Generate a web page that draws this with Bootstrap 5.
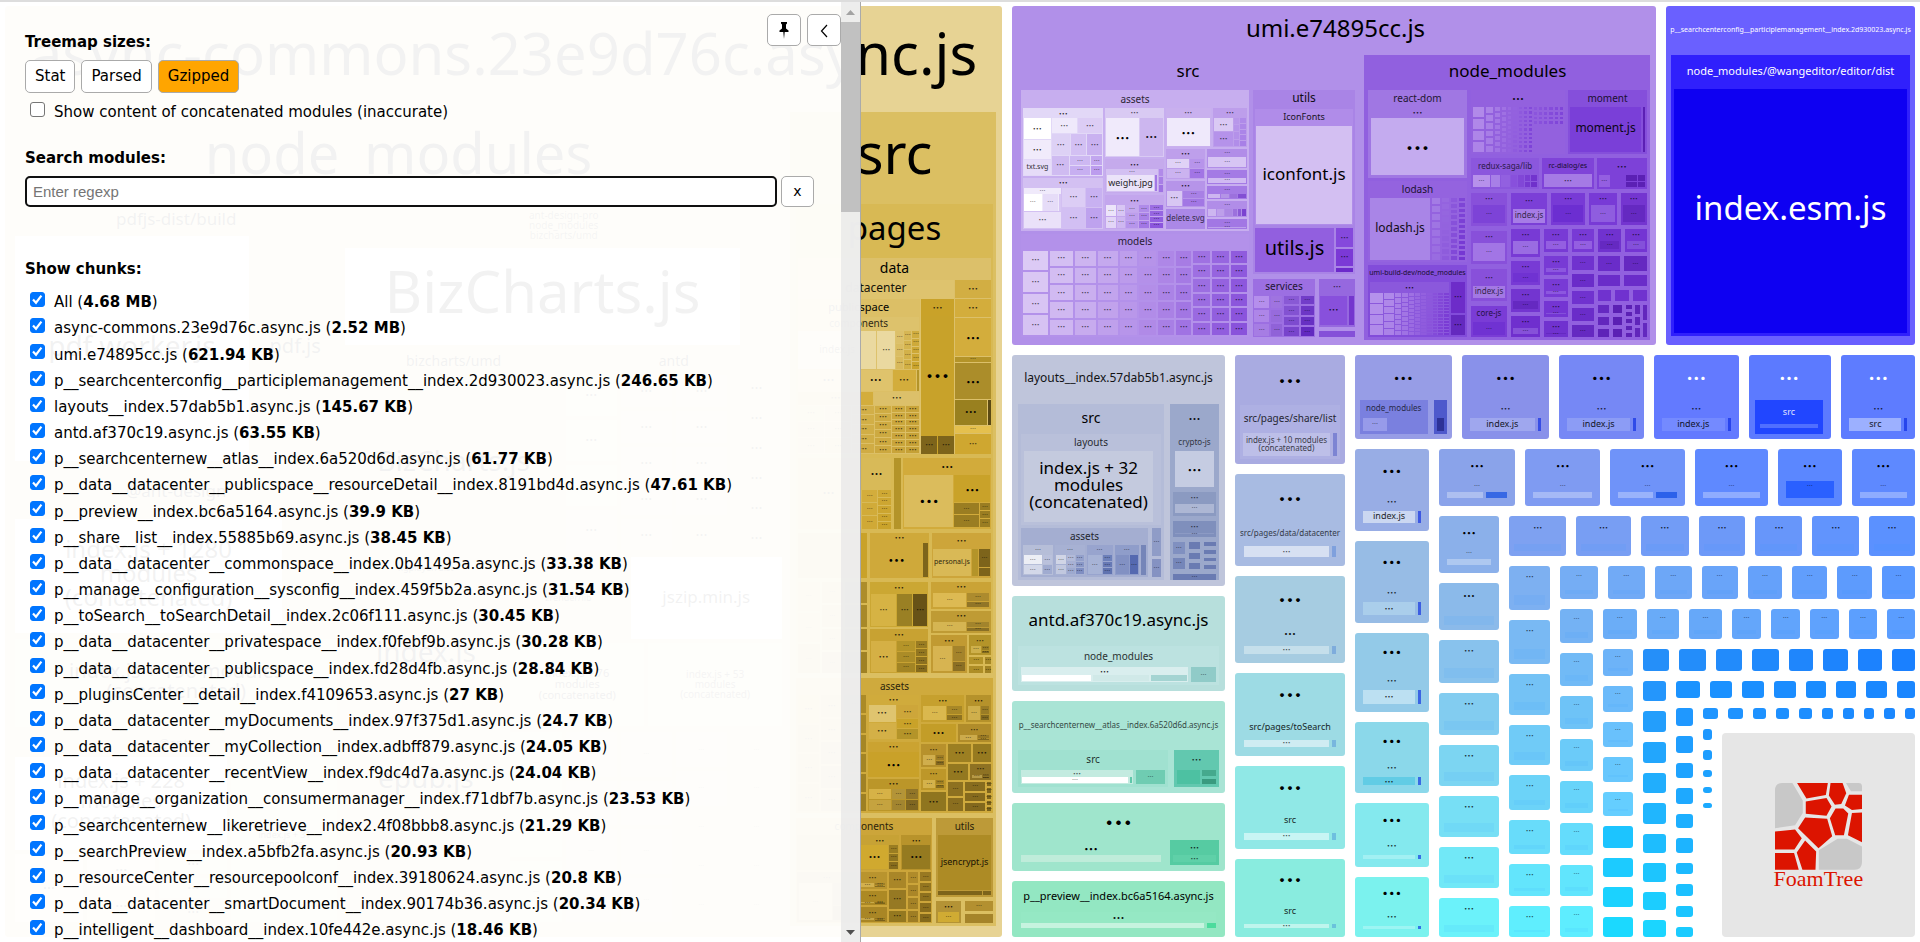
<!DOCTYPE html>
<html lang="en">
<head>
<meta charset="utf-8">
<meta name="viewport" content="width=device-width, initial-scale=1">
<title>Webpack Bundle Analyzer</title>
<link href="https://cdn.jsdelivr.net/npm/bootstrap@5.3.0/dist/css/bootstrap.min.css" rel="stylesheet">
<style>
  body { font-family: "DejaVu Sans", Verdana, sans-serif; font-size: 15px; color: #000; background: #fff; }
  .stage { border-top: 2px solid #ddd; padding: 4px 5px 5px; }

  /* treemap */
  .treemap { font-family: "Noto Sans", "Noto Sans CJK SC", sans-serif; line-height: 1; color: #000; }
  .tiles { display: grid; grid-template-rows: minmax(0, 1fr); grid-template-columns: minmax(0, 1fr); flex: 1 1 0; min-height: 0; min-width: 0; }
  .tile { min-width: 0; min-height: 0; display: flex; flex-direction: column; }
  .tile.soft { border-radius: 3px; }
  .cap { display: flex; align-items: center; justify-content: center; text-align: center; white-space: pre; min-height: 0; min-width: 0; padding-bottom: .2em; }
  .tile > .cap:only-child { flex: 1 1 0; }
  .dots { font-family: "Noto Sans CJK SC", sans-serif; font-weight: 700; padding: 0; }
  .pale { color: #fff; }
  .t6 { font-size: 6px; opacity: .5; } .t7 { font-size: 7px; opacity: .8; } .t8 { font-size: 8px; opacity: .7; } .t9 { font-size: 9px; opacity: .85; }
  .t10 { font-size: 10px; opacity: .8; } .t11 { font-size: 11px; } .t12 { font-size: 12px; opacity: .9; } .t14 { font-size: 14px; }
  .t17 { font-size: 17px; } .t20 { font-size: 20px; } .t24 { font-size: 24px; } .t28 { font-size: 28px; } .t33 { font-size: 33px; } .t56 { font-size: 56px; } .t58 { font-size: 58px; }
  .t7.pale { opacity: 1; }
  .foamtree { background: #e6e6e6; border-radius: 4px; color: #dc1400; font: 22px/18px "Liberation Serif", serif; }
  .foamtree svg { width: 45%; }

  /* sidebar */
  .side { width: 861px; background: rgba(255, 255, 255, .95); border-right: 1px solid #aaa; }
  .pane { padding: 26px 27px 0 25px; }
  .head { font-weight: 700; line-height: 28px; }
  .tool { font-size: 15px; line-height: 31px; padding: 0 9px; color: #000; background: #fff; border: 1px solid #aaa; border-radius: 5px; height: 33px; }
  .tool.on { background: #ffa500; }
  .tool.slim { height: 31px; line-height: 27px; width: 33px; padding: 0; font-size: 14px; }
  .corner { top: 12px; right: 19px; gap: 6px; }
  .corner .tool { width: 34px; padding: 0; height: 32px; }
  .regexp { font: 15px/20px "Liberation Sans", sans-serif; border: 2px solid #101010; border-radius: 5px; padding: 3px 6px; height: 31px; background: #fff; min-width: 0; }
  .regexp::placeholder { color: #757575; }
  .check { appearance: none; width: 15px; height: 15px; margin: 0 9px 0 5px; border: 1px solid #767676; border-radius: 3px; background: #fff; flex: none; }
  .check:checked { border-color: #0075ff; background: #0075ff url("data:image/svg+xml,%3Csvg xmlns='http://www.w3.org/2000/svg' viewBox='0 0 15 15'%3E%3Cpath d='M3 7.5l3 3.2 5.4-7' fill='none' stroke='white' stroke-width='2.2'/%3E%3C/svg%3E") center/15px; }
  .chunks { display: grid; grid-auto-rows: 1fr; height: 654px; margin-top: 7px; }
  .line { display: flex; align-items: center; white-space: nowrap; }
  .line .check { margin-bottom: 6px; }
  .track { width: 19px; background: rgba(233, 233, 233, .8); }
  .thumb { height: 190px; background: #c1c1c1; }
  .arrow { height: 20px; }
</style>
</head>
<body class="vh-100 overflow-hidden">
<main class="stage h-100 position-relative">
  <div class="treemap h-100 d-flex" id="treemap" aria-label="Bundle treemap"></div>

  <aside class="side position-absolute top-0 start-0 h-100 d-flex overflow-hidden">
    <div class="pane flex-grow-1">
      <div class="head">Treemap sizes:</div>
      <div class="d-flex mt-1" style="gap:6px">
        <button class="tool" type="button">Stat</button>
        <button class="tool" type="button">Parsed</button>
        <button class="tool on" type="button">Gzipped</button>
      </div>
      <div class="line mt-2"><input class="check" type="checkbox" id="concat"><label for="concat">Show content of concatenated modules (inaccurate)</label></div>
      <label class="head d-block mt-3 pt-1" for="search">Search modules:</label>
      <div class="d-flex gap-1 mt-1">
        <input class="regexp flex-grow-1" id="search" type="text" placeholder="Enter regexp">
        <button class="tool slim" type="button">x</button>
      </div>
      <div class="head mt-5">Show chunks:</div>
      <div class="chunks" id="chunks"></div>
    </div>
    <div class="track d-flex flex-column flex-shrink-0">
      <div class="arrow d-flex align-items-center justify-content-center"><svg width="9" height="5"><path d="M0 5L4.500 0 9 5z" fill="#a3a3a3"/></svg></div>
      <div class="thumb mx-auto w-100"></div>
      <div class="arrow mt-auto d-flex align-items-center justify-content-center"><svg width="9" height="5"><path d="M0 0h9L4.500 5z" fill="#505050"/></svg></div>
    </div>
    <div class="corner position-absolute d-flex">
      <button class="tool" type="button" aria-label="Pin"><svg width="12" height="18" viewBox="0 0 12 18"><path d="M3 0h6v1.500L8 2.500v4l2.500 2V10H6.700L6 17l-.7-7H1.500V8.500L4 6.500v-4l-1-1z"/></svg></button>
      <button class="tool" type="button" aria-label="Hide"><svg width="8" height="14" viewBox="0 0 8 14"><path d="M7 1L1.500 7 7 13" fill="none" stroke="#000" stroke-width="1.200"/></svg></button>
    </div>
  </aside>
</main>

<script src="https://cdn.jsdelivr.net/npm/bootstrap@5.3.0/dist/js/bootstrap.bundle.min.js"></script>
<script>
  // ---- sidebar list ----
  const chunks = `All|4.68 MB
async-commons.23e9d76c.async.js|2.52 MB
umi.e74895cc.js|621.94 KB
p__searchcenterconfig__participlemanagement__index.2d930023.async.js|246.65 KB
layouts__index.57dab5b1.async.js|145.67 KB
antd.af370c19.async.js|63.55 KB
p__searchcenternew__atlas__index.6a520d6d.async.js|61.77 KB
p__data__datacenter__publicspace__resourceDetail__index.8191bd4d.async.js|47.61 KB
p__preview__index.bc6a5164.async.js|39.9 KB
p__share__list__index.55885b69.async.js|38.45 KB
p__data__datacenter__commonspace__index.0b41495a.async.js|33.38 KB
p__manage__configuration__sysconfig__index.459f5b2a.async.js|31.54 KB
p__toSearch__toSearchDetail__index.2c06f111.async.js|30.45 KB
p__data__datacenter__privatespace__index.f0febf9b.async.js|30.28 KB
p__data__datacenter__publicspace__index.fd28d4fb.async.js|28.84 KB
p__pluginsCenter__detail__index.f4109653.async.js|27 KB
p__data__datacenter__myDocuments__index.97f375d1.async.js|24.7 KB
p__data__datacenter__myCollection__index.adbff879.async.js|24.05 KB
p__data__datacenter__recentView__index.f9dc4d7a.async.js|24.04 KB
p__manage__organization__consumermanager__index.f71dbf7b.async.js|23.53 KB
p__searchcenternew__likeretrieve__index2.4f08bbb8.async.js|21.29 KB
p__searchPreview__index.a5bfb2fa.async.js|20.93 KB
p__resourceCenter__resourcepoolconf__index.39180624.async.js|20.8 KB
p__data__datacenter__smartDocument__index.90174b36.async.js|20.34 KB
p__intelligent__dashboard__index.10fe442e.async.js|18.46 KB`.split('\n');
  document.getElementById('chunks').innerHTML = chunks.map((line, i) => {
    const [name, size] = line.split('|');
    return `<div class="line"><input class="check" type="checkbox" id="c${i}" checked><label for="c${i}">${name} (<b>${size}</b>)</label></div>`;
  }).join('');
</script>
<script>
  // ---- treemap building blocks: each returns {w: weight, html} ----
  const mix = (a, b, t) => '#' + [1, 3, 5].map(i => {
    const p = parseInt(a.substr(i, 2), 16), q = parseInt(b.substr(i, 2), 16);
    return Math.round(p + (q - p) * t).toString(16).padStart(2, '0');
  }).join('');
  const cap = (text, size, h) => {
    if (!text) return h ? `<div style="flex:0 0 ${h}px"></div>` : '';
    let cls = 'cap t' + size;
    if (text[0] === '!') { cls += ' pale'; text = text.slice(1); }
    if (text === '.') { cls += ' dots'; text = '…'; }
    return `<div class="${cls}"${h ? ` style="flex:0 0 ${h}px"` : ''}>${text}</div>`;
  };
  const tiles = (dir, gap, kids) =>
    `<div class="tiles" style="gap:${gap}px;grid-template-${dir === 'r' ? 'columns' : 'rows'}:${kids.map(k => `minmax(0,${k.w}fr)`).join(' ')}">${kids.map(k => k.html).join('')}</div>`;
  const leaf = (w, color, text, size = 8) => ({ w, html: `<div class="tile" style="background:${color}">${cap(text, size)}</div>` });
  const space = w => ({ w, html: '<div></div>' });
  const row = (w, gap, kids) => ({ w, html: tiles('r', gap, kids) });
  const col = (w, gap, kids) => ({ w, html: tiles('c', gap, kids) });
  // group with a caption of height h over its children; dir is r (side by side) or c (stacked)
  const grp = (w, color, pad, text, size, h, dir, gap, kids) =>
    ({ w, html: `<div class="tile" style="background:${color};padding:${pad}">${cap(text, size, h)}${tiles(dir, gap, kids)}</div>` });
  const soft = n => ({ w: n.w, html: n.html.replace('class="tile"', 'class="tile soft"') });
  // columns of equal cells fading from one colour to another; cols is "width:count ..."
  const grid = (w, gap, a, b, cols, size = 6, label = '.') => {
    const list = cols.split(' ').map(s => s.split(':').map(Number));
    return row(w, gap, list.map(([cw, n], i) =>
      col(cw, gap, Array.from({ length: n }, (_, j) => leaf(1, mix(a, b, Math.min(1, (i + j / n) / list.length)), label, size)))));
  };

  // ---- async-commons: node_modules ----
  const Y = { a: '#dcc06a', b: '#d3ad3c', c: '#c9a229', d: '#b49429', e: '#9a7d22', f: '#7d641b', g: '#ead9a0' };
  const mini = (w, base, size = 8) => grp(w, base, '0 2px 2px', '.', size, 11, 'r', 1, [
    leaf(6, mix(base, '#ffe48a', .35), '.', 6),
    col(4, 1, [leaf(3, mix(base, '#000000', .15), '.', 6), leaf(2, mix(base, '#000000', .28), '.', 6)])
  ]);
  const H = '#e8dcae';
  const nmLeft = col(325, 6, [
    grp(258, Y.g, '0', 'pdfjs-dist/build', 17, 32, 'r', 4, [leaf(235, '#fff', 'pdf.worker.js', 28), leaf(85, Y.g, 'pdf.js', 20)]),
    grp(167, Y.g, '0', '@ant-design', 17, 52, 'r', 4, [leaf(260, '#fff', 'index.js + 1280\nmodules\n(concatenated)', 24), space(50)]),
    leaf(89, H, 'index.js + 196 modules\n(concatenated)', 20),
    grp(190, Y.g, '0', '@antv', 12, 24, 'r', 4, [
      col(200, 4, [leaf(95, '#fff', 'index.js + 228\nmodules\n(concatenated)', 20), grid(70, 4, '#f4ecc8', Y.g, '1:1 1:2 1:3', 12)]),
      leaf(100, H, 'index.js + 31\nmodules', 9)
    ])
  ]);
  const nmRight = col(440, 6, [
    grp(141, Y.g, '0', 'ant-design-pro\nnode_modules\nbizcharts/umd', 10, 44, 'r', 4, [leaf(390, '#fff', 'BizCharts.js', 58), space(38)]),
    row(200, 4, [
      grp(215, Y.g, '0', 'bizcharts/umd', 14, 24, 'c', 2, [leaf(1, Y.g, 'BizCharts.js', 28)]),
      grp(215, Y.g, '0', 'antd', 14, 24, 'c', 2, [grid(1, 4, H, Y.g, '1:4 1:5 1:5 1:6', 12)])
    ]),
    row(170, 4, [
      grp(160, Y.g, '0', 'xgplayer/dist', 9, 24, 'c', 0, [leaf(1, Y.g, 'index.js', 28)]),
      col(270, 4, [
        row(80, 4, [leaf(115, Y.g, 'zrender/lib', 9), leaf(150, '#fff', 'jszip.min.js', 17)]),
        row(80, 4, [leaf(1, H, 'index.js + 76\nmodules\n(concatenated)', 11), leaf(1, H, 'index.js + 53\nmodules\n(concatenated)', 10)])
      ])
    ]),
    row(190, 4, [
      col(160, 4, [leaf(95, Y.g, 'epub.js', 28), space(90)]),
      grid(270, 4, H, Y.g, '1:3 1:4 1:4 1:5 1:5')
    ])
  ]);
  const nodeModules = grp(775, Y.g, '0 4px 4px', 'node_modules', 56, 92, 'r', 8, [nmLeft, nmRight]);

  // ---- async-commons: src ----
  const publicspace = grp(121, '#dcbf66', '0 1px 1px 0', 'publicspace', 11, 18, 'c', 1, [
    grp(57, '#ddc26c', '0', 'components', 10, 14, 'r', 1, [leaf(78, Y.g, 'index.js', 10), leaf(18, Y.g, '.', 8), grid(23, 1, Y.a, Y.c, '1:3 1:4 1:5')]),
    row(23, 1, [leaf(64, Y.a, '.', 12), leaf(33, '#dfc36c', '.', 12), leaf(24, Y.b, '.', 10), leaf(3, Y.d)]),
    row(14, 1, [leaf(74, Y.b, '.', 10), leaf(45, Y.a, '.', 10)]),
    grid(52, 1, '#d9b751', '#c5a035', '16:3 16:3 13:5 10:6 8:7 8:7', 8)
  ]);
  const datacenter = grp(155, '#dec36e', '0', 'datacenter', 12, 19, 'r', 1, [
    publicspace,
    grp(32, Y.c, '0', '.', 10, 17, 'c', 1, [
      leaf(116, '#c8a22a', '.', 24),
      row(18, 1, [leaf(1, Y.f, '.', 8), leaf(1, Y.f, '.', 8)])
    ])
  ]);
  const data = grp(195, Y.a, '0', 'data', 14, 22, 'r', 1, [
    datacenter,
    col(36, 1, [
      leaf(17, '#d2ae43', '.', 10), leaf(17, Y.b, '.', 10), leaf(36, Y.b, '.', 14), leaf(5, Y.d, '.', 6),
      leaf(34, '#ab8d2a', '.', 14),
      row(24, 1, [leaf(32, '#99801f', '.', 12), leaf(3, '#5b4a14')]),
      leaf(7, '#e5c04e', '.', 6), leaf(19, '#cfa730', '.', 8)
    ])
  ]);
  const pagesRow2 = row(70, 2, [
    row(104, 3, [
      leaf(64, Y.b, '.', 12),
      grp(30, '#d8ba58', '0', '.', 12, 32, 'r', 1, [grid(30, 1, Y.b, Y.c, '12:3 10:5')]),
      leaf(8, Y.d)
    ]),
    grp(88, '#d2ab3b', '0 1px 2px', '.', 12, 17, 'r', 1, [
      leaf(48, '#dbbc5c', '.', 20),
      col(35, 1, [leaf(28, Y.c, '.', 14), row(24, 1, [grid(24, 1, Y.e, Y.e, '1:2'), grid(10, 1, Y.e, Y.e, '1:3')])])
    ])
  ]);
  const pagesRow3 = row(45, 3, [
    leaf(70, Y.c),
    grp(60, '#cfa93a', '0 1px 1px', '.', 10, 10, 'r', 1, [leaf(52, '#cfa93a', '.', 17), leaf(5, Y.f)]),
    grp(60, '#cda53a', '0 1px 2px', '.', 10, 16, 'r', 1, [leaf(38, '#d9b956', 'personal.js', 7), leaf(6, Y.d), col(11, 1, [leaf(13, Y.f, '.', 6), leaf(5, Y.f)])])
  ]);
  const pagesRow4 = row(91, 3, [
    grid(70, 2, Y.b, Y.e, '1:3 1:4 1:4'),
    col(60, 2, [
      grp(45, '#cba733', '0 1px 1px', '.', 10, 12, 'r', 1, [leaf(26, '#d6b344', '.'), leaf(15, '#9a8024', '.'), leaf(14, '#675217', '.')]),
      grp(44, '#c8a232', '0 1px 1px', '.', 10, 12, 'r', 1, [leaf(24, '#d5b045', '.', 10), grid(28, 1, Y.d, Y.f, '3:3 2:4')])
    ]),
    col(61, 2, [
      mini(27, '#caa336', 10), mini(22, '#bf9b34', 10),
      row(38, 2, [mini(37, '#c19a32', 10), col(23, 2, [mini(12, Y.d), grid(10, 2, Y.d, Y.e, '16:2 6:2')])])
    ])
  ]);
  const pages = grp(466, '#d8b954', '0 2px', 'pages', 33, 54, 'c', 4, [data, pagesRow2, pagesRow3, pagesRow4]);

  const srcAssets = grp(134, '#cfaa3d', '0 2px 2px', 'assets', 10, 17, 'r', 2, [
    grid(68, 2, '#cda530', Y.e, '1:4 1:5 1:6', 8),
    col(52, 2, [
      grp(45, '#d0ab3c', '0 1px 1px', '.', 10, 10, 'r', 1, [
        col(26, 1, [leaf(1, '#dfc46f', '.', 10), leaf(1, '#d4b047', '.', 10)]),
        col(21, 1, [leaf(12, '#cda63a', '.'), leaf(9, Y.c, '.'), leaf(9, Y.d, '.')])
      ]),
      grp(35, '#cba331', '0', '.', 10, 10, 'c', 1, [leaf(25, '#c9a129', '.', 14)]),
      grp(33, '#bb9629', '0 1px 1px', '.', 10, 10, 'r', 1, [grid(50, 1, '#d6b247', '#6e5719', '22:2 13:2 12:2')])
    ]),
    col(70, 2, [
      row(27, 2, [mini(43, '#c6a02e', 9), mini(25, '#b5922b', 9)]),
      row(18, 2, [leaf(34, '#c39d28', '.', 12), mini(33, '#b08c2a')]),
      row(67, 2, [
        col(25, 2, [mini(23, '#b7912c'), mini(22, '#bd9729'), leaf(20, '#8f751f', '.', 10)]),
        col(44, 2, [
          row(18, 2, [leaf(23, '#9c7f22', '.', 10), leaf(18, '#967a20', '.', 10)]),
          row(17, 2, [leaf(20, '#937820', '.', 10), mini(21, '#8e7223')]),
          grid(30, 2, '#8d7120', '#7a611a', '16:2 21:3 4:5')
        ])
      ])
    ])
  ]);
  const components = grp(136, '#cca53a', '0 1px 1px', 'components', 10, 17, 'c', 2, [
    row(34, 2, [
      leaf(62, Y.c),
      grp(40, '#c7a235', '0 1px 1px', '.', 9, 10, 'r', 1, [leaf(28, '#d0a92f', '.', 12), grid(10, 1, Y.e, Y.f, '1:3')]),
      grp(30, '#b8932b', '0 1px 1px', '.', 9, 10, 'c', 1, [leaf(1, '#957a20', '.', 12)])
    ]),
    row(48, 2, [
      mini(62, '#b6922f'),
      col(29, 2, [mini(16, '#b9942e'), mini(14, '#ac8924'), mini(14, '#a98625')]),
      col(18, 2, [leaf(12, '#a98628', '.'), leaf(15, '#967923', '.'), leaf(9, '#947820', '.')]),
      grid(24, 2, '#b08b2a', '#806619', '1:4 1:5')
    ])
  ]);
  const utilsCol = col(57, 4, [
    grp(78, '#bd9a38', '0 2px 2px', 'utils', 10, 17, 'c', 1, [leaf(54, '#ad8b25', 'jsencrypt.js', 9), row(4, 1, [leaf(44, Y.f), leaf(8, Y.f)])]),
    row(22, 4, [
      grp(25, '#b49335', '0 2px 1px', '.', 9, 11, 'c', 1, [leaf(1, '#d0ab33', '.', 6)]),
      col(28, 3, [leaf(10, '#b39030', '.', 6), leaf(8, '#a5842a')])
    ])
  ]);
  const commons = soft(grp(997, '#e7d394', '0 6px 11px', 'async-commons.23e9d76c.async.js', 58, 106, 'r', 4, [
    nodeModules,
    grp(206, '#dbbf62', '0 3px 3px 6px', 'src', 56, 92, 'c', 5, [pages, srcAssets, row(104, 4, [components, utilsCol])])
  ]));

  // ---- umi ----
  const wide = (w, bg, bar) => grp(w, bg, '0 1px 1px', '.', 6, 8, 'c', 1, [leaf(1, bar, '.', 6)]);
  const umiAssets1 = col(81, 2, [
    grp(68, '#e2d8f7', '0 1px 1px', '.', 9, 10, 'r', 1, [
      col(27, 1, [leaf(21, '#fff', '.', 9), leaf(18, '#f1ebfb', '.', 9), leaf(15, '#e6dcf8', 'txt.svg', 7)]),
      col(51, 1, [
        row(15, 1, [leaf(25, '#efe9fb', '.', 8), leaf(24, '#dccdf5', '.', 8)]),
        row(20, 1, [leaf(18, '#ddd1f5', '.'), leaf(15, '#d3c0f3', '.'), leaf(15, '#c9b1f0', '.')]),
        row(18, 1, [leaf(17, '#cfbbf1', '.'), grid(32, 1, '#cdb8f2', '#b693ec', '20:2 11:2')])
      ])
    ]),
    grp(51, '#d3c0f2', '0 1px 1px', '.', 9, 10, 'r', 1, [
      col(37, 1, [
        grp(23, '#f0eafb', '0', '.', 6, 6, 'r', 1, [leaf(18, '#fff', '.', 6), leaf(16, '#e6dcf8', '.', 6), leaf(2, '#d7c6f4')]),
        leaf(16, '#eae1f9', '.', 8)
      ]),
      grid(40, 1, '#dccdf5', '#b494ec', '23:2 17:2', 8)
    ])
  ]);
  const umiAssets2 = col(59, 2, [
    grp(49, '#d9caf3', '0 1px 1px', '.', 8, 10, 'r', 1, [leaf(33, '#f0eafb', '.', 14), leaf(23, '#ccb6ef', '.', 12)]),
    grp(34, '#c5aaec', '0 1px 1px', '.', 9, 10, 'r', 1, [
      grp(52, '#d3c0f2', '0 1px 1px', '.', 6, 6, 'r', 1, [leaf(48, '#ebe3f9', 'weight.jpg', 9), leaf(2, '#a277e5')]),
      grid(4, 1, '#b18ae9', '#9668e0', '1:3', 6, '')
    ]),
    grp(33, '#c3a6ed', '0 1px 1px', '.', 9, 10, 'r', 1, [grid(56, 1, '#ece4fa', '#874fdd', '10:2 9:2 12:3 11:3 13:4')])
  ]);
  const umiAssets3 = col(82, 2, [
    row(39, 2, [
      grp(45, '#c9b0ee', '0 1px 1px', '.', 8, 10, 'r', 1, [leaf(1, '#efe9fb', '.', 14)]),
      grp(34, '#bd9eeb', '0 1px 1px', '.', 8, 10, 'r', 1, [
        col(19, 1, [leaf(12, '#dac9f4', '.'), leaf(12, '#b592ea', '.')]),
        grid(12, 1, '#b897ea', '#a67de7', '1:4 1:5', 6, '')
      ])
    ]),
    row(80, 2, [
      col(39, 2, [
        grp(29, '#be9feb', '0 1px 1px', '.', 9, 10, 'r', 1, [grid(1, 1, '#e0d2f6', '#8d56df', '22:2 14:2')]),
        grp(26, '#b694e9', '0 1px 1px', '.', 9, 10, 'r', 1, [leaf(15, '#d8c7f3', '.', 8), grid(21, 1, '#a880e5', '#9c6de3', '1:2')]),
        leaf(19, '#ab88e7', 'delete.svg', 8)
      ]),
      col(39, 2, [
        wide(18, '#b18de8', '#d7c5f4'), wide(13, '#a47ae5', '#d0baf2'),
        grp(13, '#a47ae5', '0 1px 1px', '.', 6, 8, 'r', 1, [grid(1, 1, '#cdb6f0', '#6a2cc9', '3:1 2:1 2:1 2:1', 6, '')]),
        grp(15, '#b18de8', '0 1px 1px', '.', 6, 8, 'r', 1, [grid(1, 1, '#cdb6f0', '#6a2cc9', '2:1 2:1 2:1 1:1 1:1 1:1', 6, '')]),
        wide(9, '#a277e4', '#bda0ec')
      ])
    ])
  ]);
  const umiSrc = grp(334, '#b190e9', '0 0 3px', 'src', 17, 35, 'r', 4, [
    col(228, 3, [
      grp(140, '#c7aeef', '1px 2px 2px', 'assets', 10, 17, 'r', 2, [umiAssets1, umiAssets2, umiAssets3]),
      grp(103, '#b391ea', '0 2px 2px', 'models', 10, 17, 'r', 2, [grid(1, 2, '#dccaf5', '#8850db', '25:4 23:5 21:5 20:5 18:5 17:5 16:5 15:5 17:6 17:6 16:6', 8)])
    ]),
    col(102, 5, [
      grp(183, '#a984e6', '0 2px 2px', 'utils', 12, 19, 'c', 3, [
        grp(117, '#b08ce9', '0 1px 1px', 'IconFonts', 9, 17, 'c', 0, [leaf(1, '#d3bff2', 'iconfont.js', 17)]),
        row(44, 2, [leaf(79, '#925fdf', 'utils.js', 20), col(17, 2, [leaf(19, '#8549dc', '.', 8), leaf(17, '#7b39d6', '.', 8), leaf(4, '#6c29cb')])])
      ]),
      row(58, 4, [
        grp(62, '#9c6fe2', '0 1px 1px', 'services', 10, 17, 'r', 1, [grid(1, 2, '#b58fec', '#5c22bd', '15:3 11:3 14:4 13:4')]),
        col(36, 4, [
          grp(49, '#9668df', '0 1px 2px', '.', 8, 17, 'r', 2, [leaf(27, '#8850dc', '.', 10), leaf(5, '#7436ce')]),
          leaf(6, '#8550d8')
        ])
      ])
    ])
  ]);

  const p = (w, bg, bar) => grp(w, bg, '0 2px 3px', '.', 8, 12, 'c', 0, [leaf(1, bar, '.', 6)]);
  const libs1 = col(99, 3, [
    grp(88, '#a077e3', '0 3px 3px', 'react-dom', 10, 17, 'c', 0, [
      grp(1, '#a077e3', '0', '.', 10, 11, 'c', 0, [leaf(1, '#c4abef', '.', 24)])
    ]),
    grp(81, '#9463df', '0 2px 2px', 'lodash', 10, 17, 'r', 2, [leaf(60, '#a985e7', 'lodash.js', 12), grid(33, 2, '#a47ce5', '#7334d2', '8:8 7:10 6:11 6:12', 6, '')]),
    grp(72, '#824cda', '0 2px 2px', 'umi-build-dev/node_modules', 7, 17, 'r', 2, [
      grp(80, '#8b58dc', '0', '.', 9, 11, 'c', 0, [grid(1, 1, '#b591ec', '#7839d4', '11:4 8:6 5:8 5:9 4:11 4:12 4:13 4:14 4:14 4:14 4:14', 6, '')]),
      col(14, 2, [leaf(30, '#6d2cc9', '.', 8), leaf(20, '#6429bf', '.', 8)])
    ])
  ]);
  const libsTop = row(64, 3, [
    grp(94, '#9361de', '0 2px 2px', '.', 12, 17, 'r', 2, [
      grid(60, 2, '#b18ae9', '#7d42d8', '12:4 7:6 5:8 4:9 4:10 4:10 3:11 3:11 3:11', 6, ''),
      col(30, 2, [grid(18, 2, '#8c56dd', '#7d42d8', '1:4 1:4 1:4 1:4 1:4 1:4', 6, ''), space(27)])
    ]),
    grp(79, '#854fdb', '0 2px 2px', 'moment', 10, 17, 'r', 2, [leaf(73, '#7a3fd8', 'moment.js', 12), leaf(2, '#5b20b4')])
  ]);
  const libsMid = row(31, 3, [
    grp(69, '#8b57dd', '0 2px 2px', 'redux-saga/lib', 8, 17, 'r', 1, [leaf(16, '#b791eb', '.', 6), leaf(9, '#a77fe7'), leaf(8, '#9260e0'), grid(25, 1, '#8850dc', '#6b2bc9', '1:1 1:1 1:2 1:2', 6, '')]),
    grp(52, '#7f43d8', '0 2px 2px', 'rc-dialog/es', 7, 16, 'c', 0, [leaf(1, '#a57ae5', '.', 8)]),
    grp(51, '#7d41d8', '0 2px 2px', '.', 10, 17, 'r', 2, [leaf(12, '#945fe1', '.', 6), space(12), grid(20, 1, '#5b20b4', '#5b20b4', '12:2 8:2', 6, '')])
  ]);
  const libsA = col(36, 5, [
    p(33, '#8850da', '#7d43d7'), p(33, '#8850da', '#a275e5'),
    grp(32, '#8850da', '0 2px 3px', '.', 8, 17, 'c', 0, [leaf(1, '#a378e4', 'index.js', 8)]),
    grp(31, '#7a3cd6', '0 2px 2px', 'core-js', 8, 16, 'c', 0, [leaf(1, '#7032d2', '.', 6)])
  ]);
  const libsB = row(32, 4, [
    grp(37, '#7b3fd7', '0 2px 2px', '.', 8, 16, 'c', 0, [leaf(1, '#a67ce6', 'index.js', 8)]),
    p(35, '#783ad6', '#6c2ed1'), p(28, '#783ad6', '#8f5ddf'), p(27, '#7435d0', '#6529c1')
  ]);
  const libsE = col(50, 4, [
    row(14, 4, [leaf(1, '#6a2cc9', '.', 6), leaf(1, '#6529c1', '.', 6)]),
    row(10, 4, [leaf(1, '#6a2cc9'), leaf(1, '#6a2cc9')]),
    row(11, 4, [leaf(1, '#7032cf'), leaf(1, '#7032cf'), leaf(1, '#7032cf')]),
    row(30, 4, [grid(12, 4, '#6529c1', '#5b20b4', '1:3', 6, ''), grid(9, 4, '#5b20b4', '#5b20b4', '1:3', 6, ''), grid(21, 3, '#5b20b4', '#6529c1', '3:5 3:3 2:2', 6, '')])
  ]);
  const libsD = col(103, 4, [
    row(23, 4, [p(24, '#783ad5', '#945fe1'), p(23, '#783ad5', '#945fe1'), p(23, '#7032cf', '#6529c1'), p(22, '#7435d3', '#8450da')]),
    row(80, 4, [
      col(24, 4, [p(19, '#783ad5', '#8c57df'), p(18, '#783ad5', '#8c57df'), p(17, '#7435d3', '#8450da'), p(16, '#7032cf', '#6529c1')]),
      col(22, 4, [leaf(14, '#7032cf', '.', 6), leaf(13, '#6a2cc9', '.', 6), leaf(13, '#7032cf', '.', 6), leaf(13, '#6a2cc9', '.', 6), leaf(12, '#6529c1', '.', 6)]),
      libsE
    ])
  ]);
  const libsC = row(108, 4, [
    col(29, 4, [p(28, '#783ad5', '#9a6ce2'), p(25, '#783ad5', '#7032d2'), p(23, '#7335d0', '#6529c1'), p(21, '#6f2fce', '#8651d9')]),
    libsD
  ]);
  const umiNode = grp(286, '#9160df', '0 3px 3px 4px', 'node_modules', 17, 35, 'r', 4, [
    libs1,
    col(176, 4, [libsTop, libsMid, row(144, 4, [libsA, col(136, 4, [libsB, libsC])])])
  ]);
  const umi = soft(grp(644, '#b190e9', '0 6px 5px 9px', 'umi.e74895cc.js', 24, 49, 'r', 9, [umiSrc, umiNode]));
  const editor = soft(grp(249, '#6a60ff', '0 5px 9px', '!p__searchcenterconfig__participlemanagement__index.2d930023.async.js', 7, 49, 'c', 0, [
    grp(1, '#3020fc', '0 3px 3px', '!node_modules/@wangeditor/editor/dist', 11, 34, 'c', 0, [leaf(1, '#0e00f2', '!index.esm.js', 33)])
  ]));

  // ---- first column ----
  const layoutAssets = grp(127, '#a4aed1', '0 2px 2px', 'assets', 10, 17, 'r', 2, [
    grp(30, '#b6bed8', '0 1px 1px', '.', 6, 10, 'r', 1, [grid(1, 1, '#eceef5', '#8794c3', '18:2 10:2')]),
    grp(29, '#a7b1d3', '0 1px 1px', '.', 6, 10, 'r', 1, [grid(1, 1, '#d0d5e6', '#7585bd', '10:2 8:3 8:3')]),
    grp(26, '#98a4ce', '0 1px 1px', '.', 6, 10, 'r', 1, [leaf(15, '#a7b3d6', '.', 6), grid(9, 1, '#6d80ba', '#5a6cab', '1:3')]),
    grp(24, '#8f9dca', '0 1px 1px', '.', 6, 10, 'r', 1, [leaf(13, '#8291c3', '.', 6), leaf(8, '#5569b0', '.', 6)]),
    leaf(5, '#7585b8')
  ]);
  const layouts = soft(grp(231, '#bfc5db', '0 6px 6px', 'layouts__index.57dab5b1.async.js', 12, 49, 'r', 6, [
    grp(146, '#b4bcd8', '0 3px 3px', 'src', 14, 30, 'c', 3, [
      grp(92, '#b9c0da', '0 3px 3px', 'layouts', 10, 17, 'r', 3, [leaf(134, '#c4cade', 'index.js + 32\nmodules\n(concatenated)', 17), space(2)]),
      row(49, 4, [layoutAssets, col(9, 3, [leaf(27, '#8f9cc7', '.', 6), leaf(17, '#8592c2', '.', 6)])])
    ]),
    grp(49, '#9ba8cb', '0 3px', '.', 12, 30, 'c', 5, [
      grp(53, '#9ba8cb', '0 2px', 'crypto-js', 8, 17, 'c', 0, [leaf(1, '#c5cce2', '.', 14)]),
      p(25, '#8b9ac1', '#adb7d4'), p(16, '#7f8fbc', '#8c9ac4'),
      row(27, 4, [grid(12, 4, '#8090c0', '#6a7bb2', '1:2'), grid(12, 4, '#6a7bb2', '#6a7bb2', '1:3', 6, ''), grid(12, 4, '#6a7bb2', '#6a7bb2', '1:4', 6, '')]),
      leaf(6, '#6a7bb2', '.', 6)
    ])
  ]));
  const antd = soft(grp(95, '#b7dfdc', '0 6px 6px', 'antd.af370c19.async.js', 17, 50, 'c', 0, [
    grp(1, '#bce2e0', '0 3px 3px', 'node_modules', 10, 21, 'r', 3, [
      grp(167, '#d9eeee', '0 1px 1px', '.', 9, 8, 'r', 2, [leaf(68, '#fff'), leaf(55, '#d0e9e8'), leaf(36, '#a4d4d2')]),
      leaf(25, '#90cbc8', '.', 6)
    ])
  ]));
  const atlas = soft(grp(92, '#a9e4d5', '0 6px 6px', 'p__searchcenternew__atlas__index.6a520d6d.async.js', 8, 49, 'r', 6, [
    grp(151, '#a0e1d0', '0 3px 3px', 'src', 10, 20, 'r', 3, [
      grp(111, '#c3ebe0', '0 1px 1px', '.', 8, 7, 'r', 2, [leaf(104, '#fff', '.', 6), leaf(2, '#5fc8aa')]),
      leaf(29, '#6fccb2', '.', 6)
    ]),
    grp(45, '#62c8af', '0 3px 3px', '.', 10, 20, 'r', 2, [leaf(20, '#4dc1a2'), grid(12, 3, '#45a98d', '#2f8a71', '1:2', 6, '')])
  ]));
  const third = soft(grp(68, '#9fe5cc', '0 6px 6px', '.', 28, 37, 'r', 6, [
    grp(146, '#9fe5cc', '0 3px 3px', '.', 14, 15, 'c', 0, [leaf(1, '#bfecda')]),
    grp(49, '#56cba2', '0 3px 3px', '.', 9, 15, 'c', 0, [leaf(1, '#5fd0a8', '.', 8)])
  ]));
  const preview = soft(grp(56, '#93e7c2', '0 9px 9px', 'p__preview__index.bc6a5164.async.js', 11, 31, 'c', 0, [
    grp(1, '#95e8c4', '0', '.', 12, 11, 'r', 3, [leaf(182, '#c6f3df'), leaf(9, '#4cdb9d')])
  ]));

  // ---- second column: dots, path, bar ----
  const path = (w, bg, h, name, bar, size = 9) => soft(grp(w, bg, '0 9px 9px', '.', 24, h, 'c', 0, [
    grp(1, 'transparent', '0', name, size, 24, 'r', 3, [leaf(86, bar, '.', 8), leaf(4, mix(bg, '#2060d0', .3))])
  ]));
  const share = soft(grp(109, '#a9abe1', '0 5px 5px', '.', 24, 50, 'c', 0, [
    grp(1, '#aeb0e3', '0 3px 3px', 'src/pages/share/list', 10, 28, 'r', 3, [leaf(86, '#bdbfe8', 'index.js + 10 modules\n(concatenated)', 8), leaf(4, '#7d84d3')])
  ]));
  const second = col(110, 10, [
    share,
    path(92, '#a8bbe2', 48, 'src/pages/data/datacenter', '#d7e0f2', 8), path(86, '#a6cce1', 46, '.', '#c5dfeb', 12),
    path(83, '#9ddbe4', 43, 'src/pages/toSearch', '#cfecf2'), path(83, '#90e8e6', 43, 'src', '#c8f5f4'), path(78, '#89ecdf', 41, 'src', '#bff5ed')
  ]);

  // ---- spiral of small chunks: a row on top, a column at the left, and the rest inside ----
  const tileA = (w, bg, big, h, name, bar) => soft(grp(w, bg, '0 8px 8px', big, 20, h, 'c', 0, [
    grp(1, 'transparent', '0', '.', 10, 18, 'r', 3, [leaf(62, bar, name, 9), leaf(3, mix(bg, '#0020e0', .6))])
  ]));
  const tileB = (w, bg, dark, mark = .4) => soft(grp(w, bg, '0 8px 8px', '.', 14, 32, 'c', 0, [
    grp(1, dark || 'transparent', '0', '.', 6, 11, 'r', mark ? 3 : 0, [leaf(40, dark || mix(bg, '#ffffff', .3)), leaf(dark ? 1 : 24, dark || mix(bg, mark ? '#0040e0' : '#ffffff', mark ? .6 : .3))])
  ]));
  const tileC = (w, bg, size, h) => soft(grp(w, bg, '0 5px 5px', '.', size, h, 'c', 0, [space(4), leaf(6, mix(bg, '#2090ff', .08))]));
  const plain = (w, bg) => soft(leaf(w, bg, ''));
  const fade = (ws, a, b, make) => ws.map((w, i) => make(w, mix(a, b, ws.length > 1 ? i / (ws.length - 1) : 0)));
  const tc = (size, h) => (w, c) => tileC(w, c, size, h);
  const foam = `<div class="foamtree mt-1 d-flex flex-column align-items-center justify-content-center">
    <svg viewBox="643 431 260 260"><path fill="#c8c8c8" d="M643 453q0-22 22-22h30l31 52v38l-23 36-60 9zM855 431h38q10 0 10 10v15h-33zM774 632l56-34h28l45 23v47q0 22-22 22H774z"/>
    <path fill="#dc1400" d="M709 431h92l-6 36-58 10zM809 431h36l11 31-15 32-19 2-18-28zM864 466h39v43l-30 3-21-14zM735 486l62-10 15 25-15 28-62-6zM824 507h23l15 15-13 65h-26l-16-51zM873 521l30-2v89l-42-21zM733 534l66 4 15 52-41 36-61-60zM643 576l60-6 20 26-22 34h-58zM643 640h57l14 50h-71zM733 603l33 33-2 54h-39l-17-51z"/></svg>
    <div>FoamTree</div></div>`;
  const tileNm = soft(grp(97, '#979de6', '0 5px 5px', '.', 20, 45, 'r', 6, [
    grp(67, '#7a80df', '0 3px 3px', 'node_modules', 8, 18, 'r', 2, [leaf(24, '#979bea', '.', 6), space(35)]),
    grp(13, '#4e59cc', '0 3px 3px', '', 8, 18, 'c', 0, [leaf(1, '#2d3297')])
  ]));
  const tileDeep = soft(grp(83, '#5c7aff', '0 8px 5px 6px', '!.', 20, 45, 'c', 0, [
    grp(1, '#2146ff', '0 5px 5px', '!src', 9, 24, 'c', 0, [leaf(4, '#506fff'), space(1)])
  ]));
  const levels = [
    { rh: 84, cw: 74,
      row: [tileNm, tileA(88, '#8991ea', '.', 45, 'index.js', '#9fa7ee'), tileA(85, '#7688f5', '.', 45, 'index.js', '#8c9cf5'), tileA(85, '#637aff', '!.', 45, 'index.js', '#748aff'), tileDeep, tileA(74, '#5e7cff', '!.', 45, 'src', '#9cb0ff')],
      col: [tileA(82, '#98ade5', '.', 44, 'index.js', '#cbd7f1'), tileA(82, '#97bce5', '.', 43, '.', '#aaceeb'), tileA(80, '#93cae8', '.', 39, '.', '#bce0f2'), tileA(71, '#8bd8ea', '.', 37, '.', '#62cce5'), tileA(64, '#84e9ee', '.', 34, '', '#a2f0f3'), tileA(60, '#7bf2ee', '.', 31, '', '#9cf5f3')] },
    { rh: 57, cw: 61,
      row: [tileB(77, '#8aa3ea'), tileB(76, '#7f9bf2', '', 0), tileB(75, '#6f93f9'), tileB(74, '#5f89ff', '', 0), tileB(64, '#5b87ff', '#2a60ff'), tileB(64, '#5e89ff', '', 0)],
      col: [tileB(58, '#8bb0ea', '', 0), tileC(47, '#8bbaea', 12, 26), ...fade([43, 42, 41, 42, 41, 39], '#88c2ed', '#6bf2fa', tc(10, 22))] },
    { rh: 41, cw: 41,
      row: fade([57, 55, 48, 47, 47, 47, 46], '#7ea1f1', '#5b91ff', tc(9, 24)),
      col: fade([44, 44, 41, 40, 36, 34, 32, 31], '#7db0f1', '#5feefe', tc(8, 22)) },
    { rh: 33, cw: 33,
      row: fade([38, 37, 37, 36, 35, 35, 35, 33], '#75adf4', '#5998ff', tc(6, 20)),
      col: fade([33, 33, 33, 32, 32, 32, 31, 31], '#74b2f4', '#5eedff', tc(6, 19)) },
    { rh: 30, cw: 30,
      row: fade([34, 33, 33, 30, 29, 29, 29, 28], '#6badf7', '#5a9dff', tc(6, 17)),
      col: [...fade([27, 26, 26, 25, 24], '#6db3f8', '#65ceff', tc(6, 16)), ...fade([22, 20, 20, 20], '#1cc4ff', '#1bd9ff', plain)] },
    { rh: 22, cw: 24,
      row: fade([27, 27, 27, 27, 25, 25, 25, 23], '#258ff9', '#1a80ff', plain),
      col: fade([21, 21, 21, 21, 21, 20, 19, 19, 17], '#2496fc', '#1bd5ff', plain) },
    { rh: 18, cw: 17,
      row: fade([24, 23, 23, 22, 21, 21, 21, 19], '#1b93ff', '#1a86ff', plain),
      col: fade([18, 18, 16, 16, 15, 15, 12, 12, 12, 10], '#1f98ff', '#1bcbff', plain) },
    { rh: 11, cw: 9,
      row: fade([16, 15, 14, 14, 13, 12, 11, 11, 11, 11], '#1f95ff', '#1b86ff', plain),
      col: [...fade([11, 10, 7, 6, 6], '#1e98ff', '#1baaff', plain), space(121)] }
  ];
  const sum = ns => ns.reduce((s, n) => s + n.w, 0) + 10 * (ns.length - 1);
  const spiral = (i, w) => {
    if (i === levels.length) return { w, html: foam };
    const L = levels[i];
    const inner = spiral(i + 1, sum(L.row) - L.cw - 10);
    return col(w, 10, [row(L.rh, 10, L.row), row(sum(L.col), 10, [col(L.cw, 10, L.col), inner])]);
  };

  const first = col(213, 10, [layouts, antd, atlas, third, preview]);
  const right = col(903, 10, [row(339, 10, [umi, editor]), row(582, 10, [first, second, spiral(0, 560)])]);
  document.getElementById('treemap').innerHTML = tiles('r', 10, [commons, right]);
</script>
</body>
</html>
